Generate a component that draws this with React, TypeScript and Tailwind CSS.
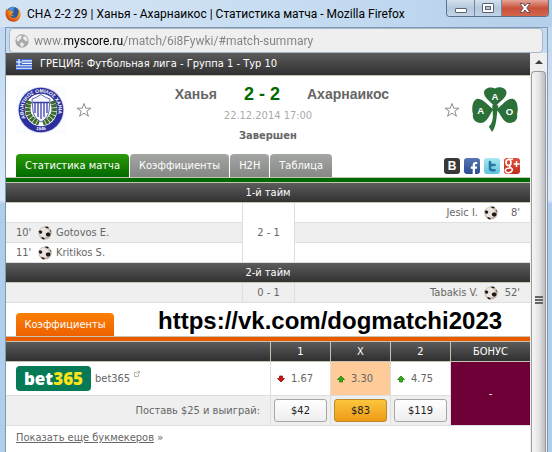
import type { ReactNode } from "react";
import { FaFacebookF } from "react-icons/fa";

const SANS = "font-['DejaVu_Sans_Condensed','DejaVu_Sans',sans-serif]";
const UI = "font-['Roboto','Open_Sans',sans-serif]";
const DARK = "bg-linear-to-b from-[#5c5c5c] to-[#303030] text-white";

function FirefoxIcon() {
  return (
    <svg viewBox="0 0 16 16" className="size-4 shrink-0" aria-hidden="true">
      <defs>
        <radialGradient id="fx" cx="0.7" cy="0.25" r="0.9">
          <stop offset="0" stopColor="#ffd83a" />
          <stop offset="0.45" stopColor="#f68a1c" />
          <stop offset="1" stopColor="#b92b0d" />
        </radialGradient>
      </defs>
      <circle cx="8" cy="7.6" r="6.8" fill="#2c5c9e" />
      <path d="M3.5 2.8A6.6 6.6 0 0 1 11 1.6C8.500 2.200 8 3.500 9 4.500L6 6Z" fill="#4b93cf" />
      <path d="M1.600 2.600C.500 5 .100 8 1 10.600 2.500 14.600 6 16 9 15.700c4-.500 6.700-3.500 6.700-7.500 0-2.600-1-4.700-3-6 1 1.800 1.300 3.200 1 4.800C13 10 11.400 12 9 12c-2 0-3.500-1-3.600-2.500 1 .6 2.300.5 3.300-.5-1.200 0-2-.3-2.300-1.200L8.500 6.500 8 5.500 5.500 5.200 4.400 3.800 2.800 4.200Z" fill="url(#fx)" />
    </svg>
  );
}

function GlobeIcon() {
  return (
    <svg viewBox="0 0 14 14" className="size-3.5 shrink-0" aria-hidden="true">
      <circle cx="7" cy="7" r="6.700" fill="#a9a9a9" />
      <path d="M1.300 4.800 3.500 2.200l3-.700.7 1.300-1.400.7.8 1.200-2 .8L3.900 7.500 2.200 7Zm6.900-2.100 2-.7 2 2.200.5 2.500-1.700.5L9.500 6 8.300 5.300ZM5 8.700l2.200-.2 2 1.500-.7 1.500-1.600 1.700L5.600 11.500Z" fill="#ececec" />
    </svg>
  );
}

function GreekFlag() {
  return (
    <svg viewBox="0 0 16 11" className="h-[11px] w-4 shrink-0" role="img" aria-label="Греция">
      <rect width="16" height="11" fill="#f4f7ff" />
      <path d="M0 .7h16M0 3.200h16M0 5.600h16M0 8h16M0 10.400h16" stroke="#3d66cf" strokeWidth="1.300" />
      <rect width="6" height="6" fill="#3d66cf" />
      <path d="M3 0v6M0 3h6" stroke="#fff" strokeWidth="1.200" />
    </svg>
  );
}

function HaniaCrest() {
  return (
    <svg viewBox="0 0 50 48" className="h-12 w-[50px]" role="img" aria-label="Ханья">
      <defs>
        <path id="ringTop" d="M10 33A17.500 17.500 0 1 1 40 33" />
        <path id="ringBottom" d="M13 40.500A21 21 0 0 0 37 40.500" />
      </defs>
      <rect width="50" height="48" fill="#fafcff" />
      <circle cx="25" cy="24" r="23" fill="#c9cbe2" />
      <circle cx="25" cy="24" r="22.300" fill="#2b2f9e" />
      <circle cx="25" cy="24" r="16.200" fill="#fff" />
      <text fontSize="5" fontWeight="700" fill="#fff" className="font-['Liberation_Sans',sans-serif]">
        <textPath href="#ringTop" startOffset="1">ΑΘΛΗΤΙΚΟΣ ΟΜΙΛΟΣ ΧΑΝΙΑ</textPath>
      </text>
      <text fontSize="4.500" fontWeight="700" fill="#fff" className="font-['Liberation_Sans',sans-serif]">
        <textPath href="#ringBottom" startOffset="50%" textAnchor="middle">1945</textPath>
      </text>
      <path d="M13.500 15C9 26 14 34 23 37M36.500 15C41 26 36 34 27 37" fill="none" stroke="#3c6b2d" strokeWidth="5.500" strokeDasharray="3 .6" />
      <path d="M16 13 20 11.500 25 8.500 30 11.500 34 13 33 25C32 31 28.500 34 25 36 21.500 34 18 31 17 25Z" fill="#f7f8ff" stroke="#3a3fa0" strokeWidth=".8" />
      <path d="M19 17v10M22 17v14M25 17v16M28 17v14M31 17v10" stroke="#4a50b8" strokeWidth="1.400" />
      <path d="M17 16.500h16" stroke="#3a3fa0" strokeWidth="1.500" />
    </svg>
  );
}

function CloverCrest() {
  return (
    <svg viewBox="0 0 48 48" className="size-[46px]" role="img" aria-label="Ахарнаикос">
      <g fill="#2c7039">
        <path d="M24 22.500C21.500 17.500 12.500 13 12.500 7 12.500 2.500 19 .300 24 2.500 29-.200 36 2.200 36 7 36 13 26.500 17.500 24 22.500Z" />
        <path d="M23 24.500C19 26 17.500 38.500 9 38.500 3 38.500 0 34 1 29-.500 25 0 15 5 13.500 12 12 18 22.500 23 24.500Z" />
        <path d="M25 24.500C29 26 31.500 38.500 39 38.500 46 38.500 48 34 47 29 48.500 25 48 15 43 13.500 36 12 30 22.500 25 24.500Z" />
        <path d="M21 20h6.500C25 32 26.500 40 21 48L17.500 42.500C23 37 22 30 21 20Z" />
      </g>
      <g fill="#fff" fontSize="10" fontWeight="700" textAnchor="middle" className="font-['Liberation_Sans',sans-serif]">
        <text x="24" y="14.500">A</text>
        <text x="9" y="29.500">A</text>
        <text x="39" y="30.500">O</text>
      </g>
    </svg>
  );
}

function StarButton({ label }: { label: string }) {
  return (
    <button type="button" aria-label={label} className="block size-4">
      <svg viewBox="0 0 16 16" className="size-4" aria-hidden="true">
        <path d="M8 1.500 9.700 6.200h5.300l-4.200 3 1.600 5L8 11.200 3.600 14.200l1.600-5L1 6.200h5.300Z" fill="#fff" stroke="#808080" strokeWidth=".9" />
      </svg>
    </button>
  );
}

function Ball() {
  return (
    <svg viewBox="0 0 14 14" className="size-3.5 shrink-0" role="img" aria-label="Гол">
      <circle cx="7" cy="7" r="6.600" fill="#c4b9b2" />
      <circle cx="6" cy="6.500" r="5" fill="#ebe4de" />
      <path d="M.500 5 2.500 4.300 4.300 5.400 4 7.300 1.800 8ZM7.800 7.500 10 6.300 12.500 7.300 12.200 9.700 10 10.800 8 9.600ZM6.500.700 9.500.600 11 1.800 9 2.600ZM3 11.500 5 11.300 7 12.800 6 13.500 4.200 13ZM12 3.200 13.400 5.500 13.200 6.600 12.300 5Z" fill="#1f1b19" />
    </svg>
  );
}

function Change({ up }: { up: boolean }) {
  return (
    <svg viewBox="0 0 8 8" className="size-2 shrink-0" role="img" aria-label={up ? "рост" : "падение"}>
      <path
        d={up ? "M4 1 7.500 4.500H5.500V7h-3V4.500H.5Z" : "M4 7 7.500 3.500H5.500V1h-3v2.500H.5Z"}
        fill={up ? "#2fae12" : "#d40d0d"}
        stroke={up ? "#14700a" : "#8c0808"}
        strokeWidth=".7"
      />
    </svg>
  );
}

function Tab({ children, active }: { children: ReactNode; active?: boolean }) {
  return (
    <button
      type="button"
      className={`h-[23px] rounded-t px-[9px] text-white ${
        active
          ? "bg-linear-to-b from-[#2b9a08] to-[#006a00]"
          : "bg-linear-to-b from-[#a3a6a3] to-[#868886]"
      }`}
    >
      {children}
    </button>
  );
}

function HalfHeader({ children }: { children: ReactNode }) {
  return (
    <tr className={DARK}>
      <th colSpan={3} className="h-5 border-b border-[#c4c4b0] p-0 font-normal">
        {children}
      </th>
    </tr>
  );
}

function HomeGoal({ minute, name }: { minute?: string; name?: string }) {
  return (
    <td className="h-5 border-b border-[#dedede] p-0 pl-2.5">
      {name && (
        <div className="flex items-center">
          <span className="w-[22px]">{minute}</span>
          <Ball />
          <span className="pl-1">{name}</span>
        </div>
      )}
    </td>
  );
}

function AwayGoal({ minute, name }: { minute?: string; name?: string }) {
  return (
    <td className="h-5 border-b border-l border-[#dedede] p-0 pr-2.5">
      {name && (
        <div className="flex items-center justify-end">
          <span className="pr-1.5">{name}</span>
          <Ball />
          <span className="w-[22px] text-right">{minute}</span>
        </div>
      )}
    </td>
  );
}

function WindowButtons() {
  return (
    <div className="flex h-[17px] self-start overflow-hidden rounded-b border border-t-0 border-[#5f7186]">
      <button type="button" aria-label="Свернуть" className="flex w-7 items-center justify-center border-r border-[#7388a0] bg-linear-to-b from-[#d3e0ee] via-[#b5c8dc] to-[#c2d5e8]">
        <span className="mt-1 h-[5px] w-3 rounded-[1px] border border-[#5a6473] bg-white" />
      </button>
      <button type="button" aria-label="Развернуть" className="flex w-[27px] items-center justify-center border-r border-[#7388a0] bg-linear-to-b from-[#d3e0ee] via-[#b5c8dc] to-[#c2d5e8]">
        <span className="flex h-2.5 w-3 items-center justify-center rounded-[1px] border border-[#5a6473] bg-white">
          <span className="h-1 w-1.5 border border-[#5a6473] bg-[#b5c8dc]" />
        </span>
      </button>
      <button type="button" aria-label="Закрыть" className="flex w-[46px] items-center justify-center bg-linear-to-b from-[#e3a498] via-[#c9503b] to-[#d3674c]">
        <svg viewBox="0 0 12 10" className="h-2.5 w-3" aria-hidden="true">
          <path d="M1 .5h3L6 3 8 .5h3L7.800 5 11 9.500H8L6 7 4 9.500H1L4.200 5Z" fill="#fff" stroke="#5a4a55" strokeWidth=".9" />
        </svg>
      </button>
    </div>
  );
}

function Scrollbar() {
  return (
    <div className="flex w-[17px] shrink-0 flex-col bg-[#efefef]" aria-hidden="true">
      <div className="flex h-[18px] items-center justify-center">
        <svg viewBox="0 0 8 4" className="h-1 w-2">
          <path d="M4 0 8 4H0Z" fill="#404040" />
        </svg>
      </div>
      <div className="mr-px ml-px flex flex-1 flex-col items-center justify-center gap-px rounded-t-sm border border-b-0 border-[#9a9a9a] bg-linear-to-r from-[#f6f6f6] via-[#e6e6e8] to-[#bcbcc2] pt-[76px]">
        <span className="h-0.5 w-2 bg-[#666]" />
        <span className="h-0.5 w-2 bg-[#666]" />
        <span className="h-0.5 w-2 bg-[#666]" />
      </div>
    </div>
  );
}

function SocialLinks() {
  return (
    <div className="mr-2.5 flex gap-1 self-center">
      <a href="#vk" aria-label="ВКонтакте" className="flex size-4 items-center justify-center rounded-[3px] bg-[#383838] font-['Liberation_Sans',sans-serif] text-xs font-bold text-white">
        В
      </a>
      <a href="#facebook" aria-label="Facebook" className="flex size-4 items-end justify-center rounded-[3px] bg-linear-to-b from-[#5575b4] to-[#2d4c90] pl-1 text-white">
        <FaFacebookF className="size-3" />
      </a>
      <a href="#twitter" aria-label="Twitter" className="flex size-4 items-center justify-center rounded-[3px] bg-linear-to-b from-[#a6e8f2] to-[#5fc3dc]">
        <svg viewBox="0 0 16 16" className="size-4" aria-hidden="true">
          <path d="M6 4v6q0 2.300 2.300 2.300H10.500M6 7h4.500" fill="none" stroke="#2577a0" strokeWidth="2.600" strokeLinecap="round" />
        </svg>
      </a>
      <a href="#google" aria-label="Google+" className="block size-4 overflow-hidden rounded-[3px] bg-linear-to-b from-[#e0503c] to-[#c32b1b]">
        <svg viewBox="0 0 16 16" className="size-4" aria-hidden="true">
          <g fill="none" stroke="#fff">
            <ellipse cx="4.500" cy="4.500" rx="2.500" ry="3" strokeWidth="1.700" />
            <path d="M4 1.300h5M6.500 6.500Q4.500 8.500 7 9.800M7 9.800q2.200 1.500.7 3.600Q6 15.300 3 14.600.700 13.500 1.500 11.500 3 9.600 6.500 10" strokeWidth="1.600" />
            <path d="M12.500 3v6M9.700 6h6" strokeWidth="1.500" />
          </g>
        </svg>
      </a>
    </div>
  );
}

const odds = [
  { outcome: "1", value: "1.67", up: false, win: "$42" },
  { outcome: "X", value: "3.30", up: true, win: "$83" },
  { outcome: "2", value: "4.75", up: true, win: "$119" },
];

function OddsTable() {
  return (
    <table className="w-full table-fixed border-separate border-spacing-0 text-center">
      <colgroup>
        <col />
        <col className="w-[60px]" />
        <col className="w-[60px]" />
        <col className="w-[60px]" />
        <col className="w-20" />
      </colgroup>
      <thead>
        <tr className="text-white">
          <th aria-label="Букмекер" className="h-5 border-b border-[#c4c4b0] bg-linear-to-b from-[#5c5c5c] to-[#303030] p-0" />
          {[...odds.map((o) => o.outcome), "БОНУС"].map((label) => (
            <th key={label} className="h-5 border-b border-l border-[#c4c4b0] bg-linear-to-b from-[#5c5c5c] to-[#303030] p-0 font-normal">
              {label}
            </th>
          ))}
        </tr>
      </thead>
      <tbody>
        <tr>
          <td className="h-[34px] border-b border-[#dedede] p-0 pl-2.5">
            <div className="flex items-center">
              <a href="#bet365" className="flex h-[25px] w-[75px] items-center justify-center rounded bg-[#067a55] font-['Open_Sans',sans-serif] text-[17px] font-extrabold text-white">
                bet<span className="text-[#ffe418]">365</span>
              </a>
              <a href="#bet365-site" className="pl-1">bet365</a>
              <svg viewBox="0 0 6 6" className="mb-2.5 ml-1 size-1.5" aria-hidden="true">
                <path d="M3 1.500H.5v4h4V3M3.500.500h2v2M5.500.500 3 3" fill="none" stroke="#b0b09a" strokeWidth=".9" />
              </svg>
            </div>
          </td>
          {odds.map((o) => (
            <td key={o.outcome} className={`h-[34px] border-b border-l border-[#dedede] p-0 ${o.outcome === "X" ? "bg-[#ffcc99]" : ""}`}>
              <div className="flex items-center gap-1.5 pl-1.5">
                <Change up={o.up} />
                {o.value}
              </div>
            </td>
          ))}
          <td rowSpan={2} className="border-b border-l border-[#dedede] bg-[#6e0037] p-0 text-white">-</td>
        </tr>
        <tr className="bg-[#efefef]">
          <td className="h-[30px] border-b border-[#dedede] p-0 pr-2.5 text-right">Поставь $25 и выиграй:</td>
          {odds.map((o) => (
            <td key={o.outcome} className="h-[30px] border-b border-l border-[#dedede] p-0">
              <button
                type="button"
                className={`mx-auto block h-[23px] w-[53px] rounded-[3px] border text-[#222] ${
                  o.outcome === "X"
                    ? "border-[#b98a2c] bg-linear-to-b from-[#fbc63c] to-[#ee9a14]"
                    : "border-[#a6a6a6] bg-linear-to-b from-white to-[#eeeeee]"
                }`}
              >
                {o.win}
              </button>
            </td>
          ))}
        </tr>
      </tbody>
    </table>
  );
}

export default function App() {
  return (
    <div className="flex min-h-screen flex-col bg-[#b0cdea] bg-linear-to-b from-[#bdd6ef] from-0% via-[#dce9f7] via-[200px] to-[#b0cdea] to-[204px]">
      <header className={`flex h-[27px] items-center bg-linear-to-r from-[#d5e4f4] via-[#c8ddf2] to-[#b4cfea] pr-[3px] pl-[5px] ${UI}`}>
        <FirefoxIcon />
        <h1 className="flex-1 truncate pl-1.5 text-xs text-black">
          CHA 2-2 29 | Ханья - Ахарнаикос | Статистика матча - Mozilla Firefox
        </h1>
        <WindowButtons />
      </header>

      <div className="mr-1 ml-[5px] flex flex-1 flex-col border border-b-0 border-[#7d99b8]">
        <div className="mr-1 ml-[3px] flex h-[25px] items-center rounded-sm border border-[#a9b7c6] bg-[#efefef] pl-[5px]">
          <GlobeIcon />
          <input
            type="text"
            aria-label="Адрес"
            defaultValue="www.myscore.ru/match/6i8Fywki/#match-summary"
            className={`ml-[5px] min-w-0 flex-1 bg-[linear-gradient(90deg,#808080_30px,#000_30px,#000_90px,#808080_90px)] bg-clip-text text-xs text-transparent outline-none ${UI}`}
          />
        </div>

        <div className="flex flex-1">
          <main className={`min-w-0 flex-1 bg-white text-[11px] leading-4 text-[#666] ${SANS}`}>
            <div className={`flex h-[23px] items-center gap-2 border-b border-[#c4c4b0] pl-2.5 ${DARK}`}>
              <GreekFlag />
              <span>ГРЕЦИЯ: Футбольная лига - Группа 1 - Тур 10</span>
            </div>

            <section className="flex h-[78px] pt-2.5 pr-3 pl-2.5">
              <HaniaCrest />
              <div className="pt-4 pl-2.5">
                <StarButton label="В избранное: Ханья" />
              </div>
              <div className="flex-1 text-center">
                <div className="grid grid-cols-[1fr_90px_1fr] pr-3 font-['Liberation_Sans',sans-serif] text-sm leading-4 font-bold">
                  <span className="text-right">Ханья</span>
                  <span className="text-lg leading-4 text-[#006a00]">2 - 2</span>
                  <span className="text-left">Ахарнаикос</span>
                </div>
                <p className="pt-1.5 text-[#aaa]">22.12.2014 17:00</p>
                <p className="pt-1 font-bold">Завершен</p>
              </div>
              <div className="pt-4 pr-3">
                <StarButton label="В избранное: Ахарнаикос" />
              </div>
              <CloverCrest />
            </section>

            <nav className="flex justify-between border-b border-[#c4c4b0]">
              <div className="flex gap-px pl-2.5">
                <Tab active>Статистика матча</Tab>
                <Tab>Коэффициенты</Tab>
                <Tab>H2H</Tab>
                <Tab>Таблица</Tab>
              </div>
              <SocialLinks />
            </nav>
            <div className="h-[5px] border-b border-[#c4c4b0] bg-[#006a00]" />

            <table className="w-full table-fixed border-separate border-spacing-0">
              <colgroup>
                <col />
                <col className="w-[52px]" />
                <col />
              </colgroup>
              <tbody>
                <HalfHeader>1-й тайм</HalfHeader>
                <tr>
                  <HomeGoal />
                  <td rowSpan={3} className="border-b border-l border-[#dedede] p-0 text-center">2 - 1</td>
                  <AwayGoal minute="8'" name="Jesic I." />
                </tr>
                <tr className="bg-[#efefef]">
                  <HomeGoal minute="10'" name="Gotovos E." />
                  <AwayGoal />
                </tr>
                <tr>
                  <HomeGoal minute="11'" name="Kritikos S." />
                  <AwayGoal />
                </tr>
                <HalfHeader>2-й тайм</HalfHeader>
                <tr className="bg-[#efefef]">
                  <HomeGoal />
                  <td className="border-b border-l border-[#dedede] p-0 text-center">0 - 1</td>
                  <AwayGoal minute="52'" name="Tabakis V." />
                </tr>
              </tbody>
            </table>

            <div className="flex items-end border-b border-[#c4c4b0] pt-2.5 pl-2.5">
              <button type="button" className="h-[23px] w-[98px] shrink-0 rounded-t bg-linear-to-b from-[#fa7f06] to-[#ee6000] text-white">
                Коэффициенты
              </button>
              <span className="self-start pl-11 font-['Liberation_Sans',sans-serif] text-2xl leading-4 font-bold whitespace-nowrap text-black">
                https://vk.com/dogmatchi2023
              </span>
            </div>
            <div className="h-[5px] border-b border-[#c4c4b0] bg-[#ea5b00]" />

            <OddsTable />

            <p className="pt-1 pl-2.5">
              <a href="#bookmakers" className="underline">Показать еще букмекеров</a> »
            </p>
          </main>
          <Scrollbar />
        </div>
      </div>
    </div>
  );
}
